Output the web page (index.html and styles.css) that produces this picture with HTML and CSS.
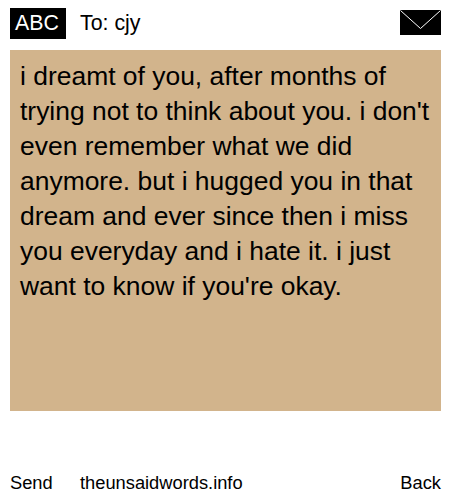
FILE: index.html
```html
<!DOCTYPE html>
<html lang="en">
<head>
    <meta charset="UTF-8">
    <meta name="viewport" content="width=device-width, initial-scale=1.0">
    <title>The Unsaid Words</title>
    <link rel="stylesheet" href="styles.css">
</head>
<body>

    <div class="top-bar">
        <span class="mode">ABC</span>
        <span class="recipient">To: cjy</span>
        <svg class="envelope" width="41" height="25" viewBox="0 0 41 25">
            <rect width="41" height="25" fill="#000"/>
            <polyline points="0.5,0.5 20.5,18.5 40.5,0.5" fill="none" stroke="#fff" stroke-width="1"/>
        </svg>
    </div>

    <div class="message">i dreamt of you, after months of trying not to think about you. i don't even remember what we did anymore. but i hugged you in that dream and ever since then i miss you everyday and i hate it. i just want to know if you're okay.</div>

    <div class="bottom-bar">
        <span class="send">Send</span>
        <span class="site">theunsaidwords.info</span>
        <span class="back">Back</span>
    </div>

</body>
</html>
```

FILE: styles.css
```css
body {
    width: 431px;
    height: 500px;
    margin: 0;
    padding: 0 9px 0 10px;
    display: flex;
    flex-direction: column;
    font-family: "Liberation Sans", Arial, sans-serif;
    color: #000;
    background: #fff;
}

.top-bar {
    height: 50px;
    display: flex;
    align-items: center;
    font-size: 21.33px;
}

.mode {
    width: 51px;
    height: 31px;
    margin-top: -4px;
    padding-left: 5px;
    line-height: 30px;
    color: #fff;
    background: #000;
}

.recipient {
    margin-left: 14px;
    margin-top: -4px;
}

.envelope {
    margin-left: auto;
    margin-top: -5px;
}

.message {
    height: 361px;
    box-sizing: border-box;
    padding: 9px 10px;
    font-size: 26.45px;
    line-height: 35px;
    background: #d2b48c;
}

.bottom-bar {
    flex: 1;
    display: flex;
    align-items: flex-end;
    padding-bottom: 6px;
    font-size: 18.3px;
}

.send {
    width: 70px;
}

.back {
    margin-left: auto;
}
```
